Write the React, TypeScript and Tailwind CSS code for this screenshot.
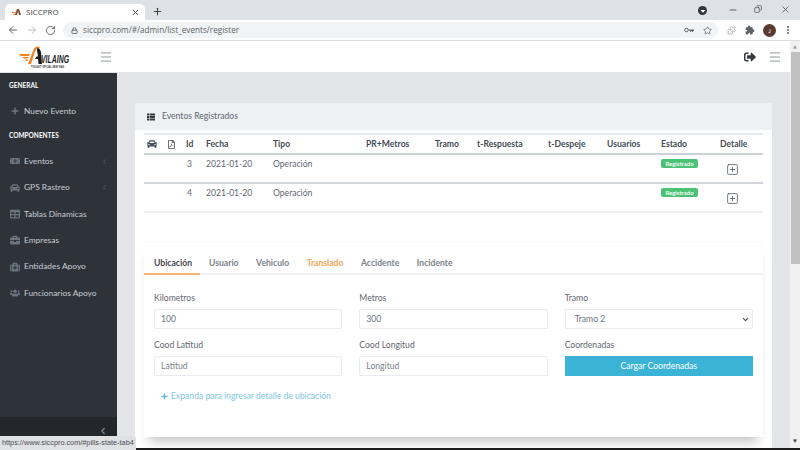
import { ArrowLeft, ArrowRight, RotateCw, Lock, Star, Puzzle, MoreVertical, Plus, X, Minus, Menu, SquarePlus, ChevronDown, ChevronLeft, Copy, Triangle } from "lucide-react";
import { FaCar, FaRegFilePdf, FaPlus, FaMoneyBillAlt, FaTable, FaBriefcase, FaMedkit, FaUsers, FaThList, FaSignOutAlt, FaCaretDown } from "react-icons/fa";
import { IoExtensionPuzzle } from "react-icons/io5";

const widths = [20, 19, 20, 67, 93, 69, 42, 71, 59, 54, 59, 46];
const heads = ["Id", "Fecha", "Tipo", "PR+Metros", "Tramo", "t-Respuesta", "t-Despeje", "Usuarios", "Estado", "Detalle"];

const menu = [
  { icon: FaMoneyBillAlt, label: "Eventos", arrow: true },
  { icon: FaCar, label: "GPS Rastreo", arrow: true },
  { icon: FaTable, label: "Tablas Dínamicas" },
  { icon: FaBriefcase, label: "Empresas" },
  { icon: FaMedkit, label: "Entidades Apoyo" },
  { icon: FaUsers, label: "Funcionarios Apoyo" },
];

const Logo = () => (
  <svg width="66" height="26" viewBox="0 0 66 26">
    <path d="M1 10h11l-1 2H2.5zM4 13h7l-1 1.6H6zM7 15.6h3l-.6 1.4H8z" fill="#f58220" />
    <path d="M10 20 15 7c1-4 5-6 7-3l-3 .5-2 3-4 12.5z" fill="#f58220" />
    <path d="M19 4.500c2-1 3.500 1 4 4l1 11.500h-3.500l-.5-5h-3l1.500-2.500h1.500l-1-6z" fill="#1b1b1b" />
    <text x="23" y="19" fontSize="10" fontWeight="700" fontStyle="italic" fontFamily="'Liberation Sans', sans-serif" fill="#222" textLength="28" lengthAdjust="spacingAndGlyphs">VILAING</text>
    <text x="13" y="24" fontSize="2.600" fontWeight="700" fontFamily="'Liberation Sans', sans-serif" fill="#333" textLength="33" lengthAdjust="spacingAndGlyphs">TOOLKIT OFICIAL DEM VIAS</text>
  </svg>
);

const Field = ({ label, children }: { label: string; children: React.ReactNode }) => (
  <div>
    <div className="h-[19px] leading-[16px] text-[#5f6670]">{label}</div>
    {children}
  </div>
);

const Input = ({ value, placeholder }: { value?: string; placeholder?: string }) => (
  <input
    readOnly
    value={value}
    placeholder={placeholder}
    className="block w-full h-[20px] px-[6px] bg-white border border-[#e9ecef] rounded-[2px] text-[#6b7280] placeholder:text-[#7b828b] outline-none"
  />
);

export default function App() {
  return (
    <div className="relative w-[800px] h-[450px] overflow-hidden flex flex-col bg-white text-[8.6px] font-['Lato','Open_Sans',sans-serif]">
      {/* browser tabs */}
      <div className="h-[20px] shrink-0 flex items-end bg-[#dee1e6] pl-[5px]">
        <div className="w-[140px] h-[16px] bg-white rounded-t-[5px] flex items-center pl-[7px] pr-[5px]">
          <svg width="9" height="8" viewBox="0 0 9 8" className="mr-[5px]">
            <path d="M0 4h4v1H0zM1 6h3v1H1z" fill="#e8873a" />
            <path d="M3 7 5 1h2l2 6H7L6 3 5 7z" fill="#7a4a2a" />
          </svg>
          <span className="flex-1 text-[8px] text-[#444] font-['Open_Sans',sans-serif]">SICCPRO</span>
          <X size={9} strokeWidth={2.5} className="text-[#444]" />
        </div>
        <Plus size={11} strokeWidth={2.5} className="ml-[7px] mb-[3px] text-[#444]" />
        <div className="flex-1" />
        <div className="w-[9px] h-[9px] mb-[5px] rounded-full bg-[#33373c] flex items-center justify-center">
          <FaCaretDown size={8} className="text-white" />
        </div>
        <Minus size={10} className="ml-[21px] mb-[5px] text-[#444]" />
        <Copy size={8} className="ml-[16px] mb-[7px] text-[#444] -scale-x-100" />
        <X size={11} strokeWidth={1.5} className="ml-[18px] mr-[9px] mb-[5px] text-[#444]" />
      </div>

      {/* browser toolbar */}
      <div className="h-[21px] shrink-0 flex items-center bg-white border-b border-[#dadce0] pl-[7px]">
        <ArrowLeft size={12} className="text-[#5f6368]" />
        <ArrowRight size={12} className="ml-[7px] text-[#b9bcc0]" />
        <RotateCw size={11} className="ml-[7px] text-[#5f6368]" />
        <div className="ml-[7px] w-[655px] h-[16px] rounded-full bg-[#f1f3f4] flex items-center pl-[8px] pr-[6px]">
          <Lock size={7} strokeWidth={3} className="text-[#5f6368]" />
          <span className="ml-[5px] flex-1 text-[8.2px] text-[#5f6368] font-['Open_Sans',sans-serif]">siccpro.com/#/admin/list_events/register</span>
          <svg width="10" height="6" viewBox="0 0 10 6" className="text-[#5f6368]">
            <circle cx="2.5" cy="3" r="1.8" fill="none" stroke="currentColor" />
            <path d="M4.5 2.500H10V4H9v1H8V4H7v1H6V3.500H4.500z" fill="currentColor" />
          </svg>
          <Star size={9} className="ml-[9px] text-[#5f6368]" />
        </div>
        <Puzzle size={9} className="ml-[9px] text-[#9aa0a6]" />
        <IoExtensionPuzzle size={10} className="ml-[9px] text-[#5f6368]" />
        <div className="ml-[8px] w-[13px] h-[13px] rounded-full bg-[#5b3a30] text-white text-[6px] flex items-center justify-center">J</div>
        <MoreVertical size={10} strokeWidth={3} className="ml-[7px] text-[#5f6368]" />
      </div>

      <div className="flex-1 min-h-0 flex">
        <div className="flex-1 min-w-0 flex flex-col">
          {/* page header */}
          <div className="h-[32px] shrink-0 flex items-center bg-white border-b border-[#e2e4e7] pl-[18px] pr-[8px]">
            <Logo />
            <Menu size={14} strokeWidth={1.2} className="ml-[15px] text-[#5f6b78]" />
            <div className="flex-1" />
            <FaSignOutAlt size={12} className="text-[#343a40]" />
            <Menu size={14} strokeWidth={1.2} className="ml-[12px] text-[#5f6b78]" />
          </div>

          <div className="flex-1 min-h-0 flex">
            {/* sidebar */}
            <div className="w-[117px] shrink-0 flex flex-col bg-[#2e333a] text-[#c9cdd2]">
              <div className="flex-1 pt-[7px] text-[8.4px]">
                <div className="h-[12px] leading-[12px] pl-[9px] text-[6.5px] font-bold text-white">GENERAL</div>
                <div className="h-[26px] mt-[6px] flex items-center pl-[10px]">
                  <FaPlus size={8} className="ml-px text-[#6c7480]" />
                  <span className="ml-[5px]">Nuevo Evento</span>
                </div>
                <div className="h-[12px] leading-[12px] mt-[6px] pl-[9px] text-[6.5px] font-bold text-white">COMPONENTES</div>
                <div className="mt-[6px]">
                  {menu.map((m) => (
                    <div key={m.label} className="h-[26.4px] flex items-center pl-[10px]">
                      <m.icon size={10} className="text-[#6c7480]" />
                      <span className="ml-[4px] flex-1">{m.label}</span>
                      {m.arrow && <ChevronLeft size={7} className="mr-[9px] text-[#6c7480]" />}
                    </div>
                  ))}
                </div>
              </div>
              <div className="h-[31px] bg-[#23272c] flex justify-end pr-[9px] pt-[9px]">
                <ChevronLeft size={10} strokeWidth={3} className="text-[#7d8794]" />
              </div>
            </div>

            {/* content */}
            <div className="flex-1 min-w-0 bg-[#e4e5e8] pt-[30px] px-[18px] overflow-hidden">
              <div className="bg-white rounded-t-[3px] h-[360px]">
                <div className="h-[27px] flex items-center pl-[12px] bg-[#eef1f4] text-[#5f6670] rounded-t-[3px]">
                  <FaThList size={8} className="text-[#343a40]" />
                  <span className="ml-[7px]">Eventos Registrados</span>
                </div>
                <div className="px-[9px] pt-[3px]">
                  <table className="w-[619px] table-fixed border-collapse text-[#5f6670]">
                    <colgroup>
                      {widths.map((w, i) => (
                        <col key={i} style={{ width: w }} />
                      ))}
                    </colgroup>
                    <thead>
                      <tr className="h-[20px] border-t-2 border-t-[#e6e8eb] border-b-2 border-b-[#ccd1d8] text-left text-[#454b54]">
                        <th className="pl-[3px]"><FaCar size={10} /></th>
                        <th className="pl-[3px]"><FaRegFilePdf size={9} className="text-[#555]" /></th>
                        {heads.map((h) => (
                          <th key={h} className="pl-[3px] font-bold">{h}</th>
                        ))}
                      </tr>
                    </thead>
                    <tbody>
                      {["3", "4"].map((id) => (
                        <tr key={id} className="h-[29px] border-b-2 border-b-[#d3d7dc] last:border-b-[#eceef0] align-top">
                          <td />
                          <td />
                          <td className="pl-[4px] pt-[3px]">{id}</td>
                          <td className="pl-[3px] pt-[3px]">2021-01-20</td>
                          <td className="pl-[3px] pt-[3px]">Operación</td>
                          <td />
                          <td />
                          <td />
                          <td />
                          <td />
                          <td className="pl-[3px] pt-[4px]">
                            <span className="block w-[37px] h-[9px] leading-[9px] rounded-[2px] bg-[#4cc277] text-center text-[6px] font-semibold text-white">Registrado</span>
                          </td>
                          <td className="pl-[9px] pt-[8px]">
                            <SquarePlus size={13} strokeWidth={1.3} className="text-[#3f4853]" />
                          </td>
                        </tr>
                      ))}
                    </tbody>
                  </table>

                  {/* detail panel */}
                  <div className="mt-[28px] h-[196px] bg-white border-t border-[#f5f6f7] shadow-[0_10px_10px_-5px_rgba(0,0,0,0.22)]">
                    <div className="h-[33px] pt-[13px] leading-[17px] flex items-stretch border-b-2 border-[#f1f2f4] font-bold text-[#7c828a]">
                      <div className="w-[56px] pl-[10px] h-[20px] text-[#3f4650] border-b-2 border-[#f8b473]">Ubicación</div>
                      <div className="ml-[9px]">Usuario</div>
                      <div className="ml-[17.6px]">Vehiculo</div>
                      <div className="ml-[17.6px] text-[#f5a55a]">Translado</div>
                      <div className="ml-[17.6px]">Accidente</div>
                      <div className="ml-[17.6px]">Incidente</div>
                    </div>
                    <div className="px-[10px] pt-[15px]">
                      <div className="grid grid-cols-3 gap-x-[17px] gap-y-[8px]">
                        <Field label="Kilometros"><Input value="100" /></Field>
                        <Field label="Metros"><Input value="300" /></Field>
                        <Field label="Tramo">
                          <div className="h-[20px] pl-[9px] pr-[2px] flex items-center justify-between bg-white border border-[#e9ecef] rounded-[2px] text-[#6b7280]">
                            <span>Tramo 2</span>
                            <ChevronDown size={9} strokeWidth={3} className="text-[#454b54]" />
                          </div>
                        </Field>
                        <Field label="Cood Latitud"><Input placeholder="Latitud" /></Field>
                        <Field label="Cood Longitud"><Input placeholder="Longitud" /></Field>
                        <Field label="Coordenadas">
                          <div className="h-[20px] flex items-center justify-center bg-[#3ab3d6] text-white">Cargar Coordenadas</div>
                        </Field>
                      </div>
                      <div className="mt-[14px] pl-[7px] flex items-center text-[#7cc6e3]">
                        <FaPlus size={7} className="text-[#5db8dc]" />
                        <span className="ml-[3px]">Expanda para ingresar detalle de ubicación</span>
                      </div>
                    </div>
                  </div>
                </div>
              </div>
            </div>
          </div>
        </div>

        {/* scrollbar */}
        <div className="w-[10px] shrink-0 flex flex-col items-center bg-[#f1f1f1]">
          <Triangle size={4} className="mt-[4px] fill-[#a3a3a3] text-[#a3a3a3]" />
          <div className="mt-[3px] w-[9px] h-[212px] bg-[#c1c1c1]" />
          <div className="flex-1" />
          <Triangle size={4} className="mb-[5px] rotate-180 fill-[#505050] text-[#505050]" />
        </div>
      </div>

      <div className="h-[2px] shrink-0 bg-[#1c1c1c]" />

      {/* hover link bubble */}
      <div className="absolute left-0 bottom-0 w-[136px] h-[14px] pl-[2px] leading-[13px] bg-[#dfe1e5] rounded-tr-[2px] text-[7.3px] text-[#4b4f54] font-['Liberation_Sans',sans-serif]">
        https://www.siccpro.com/#pills-state-tab4
      </div>
    </div>
  );
}
